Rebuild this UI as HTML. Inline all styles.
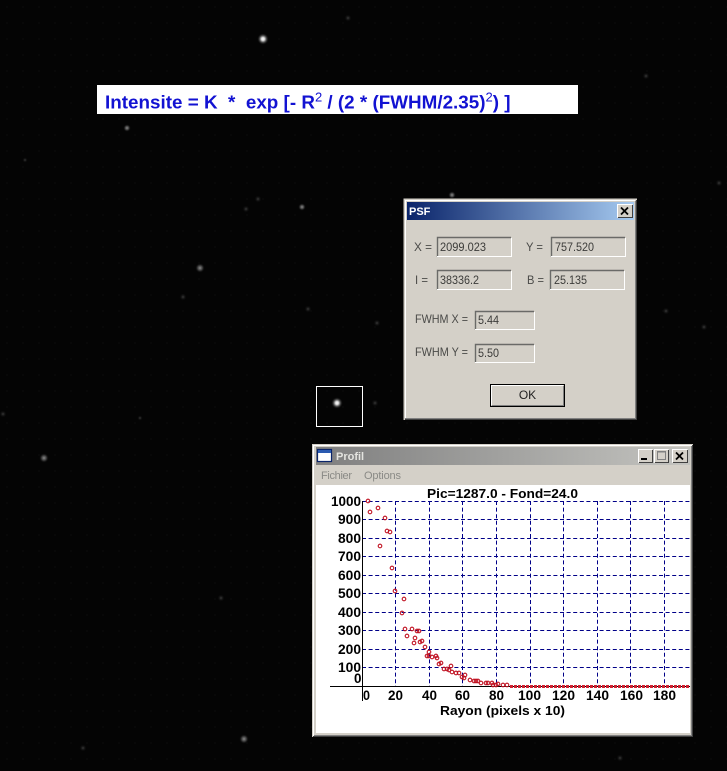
<!DOCTYPE html>
<html><head><meta charset="utf-8"><style>
html,body{margin:0;padding:0;background:#040404;width:727px;height:771px;overflow:hidden}
svg{display:block}
text{font-family:"Liberation Sans",sans-serif}
.l{font-size:12px;fill:#4a4a48}
.v{font-size:12px;fill:#3c3c3a}
.n{font-size:14px;font-weight:bold;fill:#000}
</style></head><body>
<svg width="727" height="771" viewBox="0 0 727 771" xmlns="http://www.w3.org/2000/svg">
<defs>
<radialGradient id="s"><stop offset="0" stop-color="#fff"/><stop offset=".25" stop-color="#ddd"/><stop offset=".55" stop-color="#555"/><stop offset="1" stop-color="#000" stop-opacity="0"/></radialGradient>
<radialGradient id="f"><stop offset="0" stop-color="#8a8a8a"/><stop offset=".5" stop-color="#3a3a3a"/><stop offset="1" stop-color="#000" stop-opacity="0"/></radialGradient>
<radialGradient id="d"><stop offset="0" stop-color="#3a3a3a"/><stop offset="1" stop-color="#000" stop-opacity="0"/></radialGradient>
<linearGradient id="t1"><stop offset="0" stop-color="#0a246a"/><stop offset="1" stop-color="#a6caf0"/></linearGradient>
<linearGradient id="t2"><stop offset="0" stop-color="#7f7f7f"/><stop offset="1" stop-color="#c4c4c0"/></linearGradient>
<pattern id="g" width="16" height="16" patternUnits="userSpaceOnUse"><rect x="6" y="6" width="2" height="2" fill="#080808"/></pattern>
</defs>
<rect width="727" height="771" fill="#040404"/>
<rect width="727" height="771" fill="url(#g)"/>
<!-- stars -->
<circle cx="263" cy="39" r="6" fill="url(#s)"/>
<circle cx="337" cy="403" r="6" fill="url(#s)"/>
<circle cx="200" cy="268" r="5" fill="url(#f)"/>
<circle cx="44" cy="458" r="5" fill="url(#f)"/>
<circle cx="244" cy="739" r="5" fill="url(#f)"/>
<circle cx="83" cy="748" r="4" fill="url(#d)"/>
<circle cx="127" cy="128" r="4" fill="url(#f)"/>
<circle cx="302" cy="207" r="4" fill="url(#f)"/>
<circle cx="258" cy="199" r="4" fill="url(#d)"/>
<circle cx="246" cy="209" r="4" fill="url(#d)"/>
<circle cx="452" cy="195" r="4" fill="url(#f)"/>
<circle cx="377" cy="323" r="4" fill="url(#d)"/>
<circle cx="308" cy="309" r="4" fill="url(#d)"/>
<circle cx="183" cy="297" r="4" fill="url(#d)"/>
<circle cx="666" cy="311" r="4" fill="url(#d)"/>
<circle cx="704" cy="327" r="4" fill="url(#d)"/>
<circle cx="719" cy="183" r="4" fill="url(#d)"/>
<circle cx="348" cy="18" r="4" fill="url(#d)"/>
<circle cx="646" cy="76" r="4" fill="url(#d)"/>
<circle cx="221" cy="598" r="4" fill="url(#d)"/>
<circle cx="3" cy="414" r="4" fill="url(#d)"/>
<circle cx="25" cy="160" r="3" fill="url(#d)"/>
<circle cx="140" cy="418" r="3" fill="url(#d)"/>
<circle cx="620" cy="758" r="4" fill="url(#d)"/>
<circle cx="375" cy="403" r="4" fill="url(#d)"/>
<!-- selection box -->
<rect x="316.5" y="386.5" width="46" height="40" fill="none" stroke="#fff" stroke-width="1"/>
<!-- formula -->
<rect x="97" y="85" width="481" height="29" fill="#fff"/>
<text x="105" y="108.5" font-size="18.85" font-weight="bold" fill="#1212d2" xml:space="preserve">Intensite = K  *  exp [- R<tspan font-size="13" dy="-7" font-weight="normal">2</tspan><tspan dy="7"> / (2 * (FWHM/2.35)</tspan><tspan font-size="13" dy="-7" font-weight="normal">2</tspan><tspan dy="7">) ]</tspan></text>
<!-- PSF dialog -->
<rect x="404" y="199" width="233" height="221" fill="#d4d0c8"/>
<path d="M404 420V199H637" fill="none" stroke="#d4d0c8"/>
<path d="M405 419.5H636.5V200" fill="none" stroke="#404040"/>
<path d="M405 418.5H635.5V201" fill="none" stroke="#808080"/>
<path d="M405.5 418V200.5H635" fill="none" stroke="#fff"/>
<rect x="407" y="202" width="227" height="18" fill="url(#t1)"/>
<text x="409" y="215" font-size="11" font-weight="bold" fill="#fff">PSF</text>
<g>
<rect x="617" y="204" width="16" height="14" fill="#d4d0c8"/>
<path d="M617.5 217.5V204.5H632.5" fill="none" stroke="#fff"/>
<path d="M618 217.5H632.5V205" fill="none" stroke="#404040"/>
<path d="M621 207.5l7 7M628 207.5l-7 7" stroke="#000" stroke-width="1.8"/>
</g>
<!-- fields -->
<g fill="none">
<path d="M437.5 257V237.5H511" stroke="#6a6a68" stroke-width="1.4"/><path d="M437 256.5H511.5V238" stroke="#fff"/>
<path d="M551.5 257V237.5H625" stroke="#6a6a68" stroke-width="1.4"/><path d="M551 256.5H625.5V238" stroke="#fff"/>
<path d="M437.5 290V270.5H511" stroke="#6a6a68" stroke-width="1.4"/><path d="M437 289.5H511.5V271" stroke="#fff"/>
<path d="M550.5 290V270.5H624" stroke="#6a6a68" stroke-width="1.4"/><path d="M550 289.5H624.5V271" stroke="#fff"/>
<path d="M475.5 330V311.5H534" stroke="#6a6a68" stroke-width="1.4"/><path d="M475 329.5H534.5V312" stroke="#fff"/>
<path d="M475.5 362V344.5H534" stroke="#6a6a68" stroke-width="1.4"/><path d="M475 362.5H534.5V345" stroke="#fff"/>
</g>
<text class="l" x="414" y="251" textLength="18" lengthAdjust="spacingAndGlyphs">X =</text>
<text class="l" x="526" y="251" textLength="17" lengthAdjust="spacingAndGlyphs">Y =</text>
<text class="l" x="415" y="284" textLength="13" lengthAdjust="spacingAndGlyphs">I =</text>
<text class="l" x="527" y="284" textLength="17" lengthAdjust="spacingAndGlyphs">B =</text>
<text class="l" x="415" y="323" textLength="53" lengthAdjust="spacingAndGlyphs">FWHM X =</text>
<text class="l" x="415" y="356" textLength="53" lengthAdjust="spacingAndGlyphs">FWHM Y =</text>
<text class="v" x="440" y="251" textLength="46" lengthAdjust="spacingAndGlyphs">2099.023</text>
<text class="v" x="555" y="251" textLength="39" lengthAdjust="spacingAndGlyphs">757.520</text>
<text class="v" x="440" y="284" textLength="39" lengthAdjust="spacingAndGlyphs">38336.2</text>
<text class="v" x="554" y="284" textLength="33" lengthAdjust="spacingAndGlyphs">25.135</text>
<text class="v" x="478" y="324" textLength="21" lengthAdjust="spacingAndGlyphs">5.44</text>
<text class="v" x="478" y="357" textLength="21" lengthAdjust="spacingAndGlyphs">5.50</text>
<!-- OK -->
<rect x="490.5" y="384.5" width="74" height="22" fill="#d4d0c8" stroke="#000"/>
<path d="M491.5 405V385.5H563" fill="none" stroke="#fff"/>
<path d="M492 405.5H563.5V386" fill="none" stroke="#808080"/>
<text x="527.5" y="399" font-size="12" fill="#222" text-anchor="middle">OK</text>
<!-- Profil window -->
<rect x="312" y="444" width="381" height="293" fill="#d4d0c8"/>
<path d="M313.5 736V445.5H692" fill="none" stroke="#fff"/>
<path d="M313 736.5H692.5V445" fill="none" stroke="#404040"/>
<path d="M314 735.5H691.5V446" fill="none" stroke="#808080"/>
<rect x="316" y="447" width="374" height="18" fill="url(#t2)"/>
<rect x="317.5" y="449.5" width="14" height="12" fill="#fff" stroke="#0a246a" stroke-width="1.2"/>
<rect x="318" y="450" width="13" height="3" fill="#2a5ab0"/>
<text x="336" y="460" font-size="11" font-weight="bold" fill="#e4e4e0">Profil</text>
<g>
<rect x="638" y="449" width="15" height="14" fill="#d4d0c8"/><path d="M638.5 462.5V449.5H652.5" fill="none" stroke="#fff"/><path d="M639 462.5H652.5V450" fill="none" stroke="#404040"/>
<rect x="641" y="458" width="6" height="2" fill="#000"/>
<rect x="654" y="449" width="15" height="14" fill="#d4d0c8"/><path d="M654.5 462.5V449.5H668.5" fill="none" stroke="#fff"/><path d="M655 462.5H668.5V450" fill="none" stroke="#404040"/>
<rect x="657.5" y="451.5" width="8" height="8" fill="none" stroke="#808080"/><path d="M657 452h9" stroke="#808080"/>
<rect x="672" y="449" width="16" height="14" fill="#d4d0c8"/><path d="M672.5 462.5V449.5H687.5" fill="none" stroke="#fff"/><path d="M673 462.5H687.5V450" fill="none" stroke="#404040"/>
<path d="M676 452.5l7 7M683 452.5l-7 7" stroke="#000" stroke-width="1.8"/>
</g>
<text x="321" y="479" font-size="11" fill="#8a8a86" textLength="31">Fichier</text>
<text x="364" y="479" font-size="11" fill="#8a8a86" textLength="37">Options</text>
<!-- plot area -->
<rect x="316" y="485" width="374" height="248" fill="#fff"/>
<g stroke="#000088" stroke-width="1" stroke-dasharray="4 2.6" fill="none">
<path d="M362 501.5H690M362 519.5H690M362 538.5H690M362 556.5H690M362 575.5H690M362 593.5H690M362 612.5H690M362 630.5H690M362 649.5H690M362 667.5H690"/>
<path d="M395.5 501V686M429.5 501V686M462.5 501V686M496.5 501V686M530.5 501V686M563.5 501V686M597.5 501V686M630.5 501V686M664.5 501V686"/>
</g>
<path d="M362.5 501V701M330 686.5H690" stroke="#000" stroke-width="1" fill="none"/>
<text class="n" x="427" y="498" textLength="151" lengthAdjust="spacingAndGlyphs" style="font-size:13px">Pic=1287.0 - Fond=24.0</text>
<text class="n" x="331" y="506" textLength="30" lengthAdjust="spacingAndGlyphs">1000</text>
<text class="n" x="338" y="524" textLength="23" lengthAdjust="spacingAndGlyphs">900</text>
<text class="n" x="338" y="543" textLength="23" lengthAdjust="spacingAndGlyphs">800</text>
<text class="n" x="338" y="561" textLength="23" lengthAdjust="spacingAndGlyphs">700</text>
<text class="n" x="338" y="580" textLength="23" lengthAdjust="spacingAndGlyphs">600</text>
<text class="n" x="338" y="598" textLength="23" lengthAdjust="spacingAndGlyphs">500</text>
<text class="n" x="338" y="617" textLength="23" lengthAdjust="spacingAndGlyphs">400</text>
<text class="n" x="338" y="635" textLength="23" lengthAdjust="spacingAndGlyphs">300</text>
<text class="n" x="338" y="654" textLength="23" lengthAdjust="spacingAndGlyphs">200</text>
<text class="n" x="338" y="672" textLength="23" lengthAdjust="spacingAndGlyphs">100</text>
<text class="n" x="354" y="683" textLength="7.5" lengthAdjust="spacingAndGlyphs">0</text>
<text class="n" x="363" y="700" textLength="7" lengthAdjust="spacingAndGlyphs">0</text>
<text class="n" x="388" y="700" textLength="15" lengthAdjust="spacingAndGlyphs">20</text>
<text class="n" x="422" y="700" textLength="15" lengthAdjust="spacingAndGlyphs">40</text>
<text class="n" x="455" y="700" textLength="15" lengthAdjust="spacingAndGlyphs">60</text>
<text class="n" x="489" y="700" textLength="15" lengthAdjust="spacingAndGlyphs">80</text>
<text class="n" x="518" y="700" textLength="23" lengthAdjust="spacingAndGlyphs">100</text>
<text class="n" x="552" y="700" textLength="23" lengthAdjust="spacingAndGlyphs">120</text>
<text class="n" x="586" y="700" textLength="23" lengthAdjust="spacingAndGlyphs">140</text>
<text class="n" x="620" y="700" textLength="23" lengthAdjust="spacingAndGlyphs">160</text>
<text class="n" x="653" y="700" textLength="23" lengthAdjust="spacingAndGlyphs">180</text>
<text class="n" x="440" y="715" style="font-size:13px" textLength="125" lengthAdjust="spacingAndGlyphs">Rayon (pixels x 10)</text>
<!-- data points -->
<g fill="none" stroke="#c01020" stroke-width="1.1">
<circle cx="368" cy="501" r="1.8"/><circle cx="370" cy="512" r="1.8"/><circle cx="378" cy="508" r="1.8"/><circle cx="385" cy="518" r="1.8"/><circle cx="387" cy="531" r="1.8"/><circle cx="390" cy="532" r="1.8"/><circle cx="380" cy="546" r="1.8"/><circle cx="392" cy="568" r="1.8"/>
<circle cx="395" cy="591" r="1.8"/><circle cx="404" cy="599" r="1.8"/><circle cx="402" cy="613" r="1.8"/><circle cx="405" cy="629" r="1.8"/><circle cx="407" cy="636" r="1.8"/><circle cx="412" cy="629" r="1.8"/><circle cx="417" cy="631" r="1.8"/><circle cx="419" cy="631" r="1.8"/><circle cx="415" cy="638" r="1.8"/><circle cx="414" cy="643" r="1.8"/><circle cx="420" cy="642" r="1.8"/><circle cx="422" cy="641" r="1.8"/><circle cx="425" cy="647" r="1.8"/><circle cx="429" cy="652" r="1.8"/><circle cx="427" cy="656" r="1.8"/><circle cx="429" cy="656" r="1.8"/><circle cx="432" cy="657" r="1.8"/><circle cx="436" cy="656" r="1.8"/><circle cx="437" cy="658" r="1.8"/><circle cx="441" cy="663" r="1.8"/><circle cx="439" cy="664" r="1.8"/><circle cx="444" cy="669" r="1.8"/><circle cx="447" cy="669" r="1.8"/><circle cx="449" cy="670" r="1.8"/><circle cx="451" cy="666" r="1.8"/><circle cx="452" cy="672" r="1.8"/><circle cx="456" cy="673" r="1.8"/><circle cx="459" cy="673" r="1.8"/><circle cx="462" cy="677" r="1.8"/><circle cx="465" cy="675" r="1.8"/><circle cx="464" cy="678" r="1.8"/><circle cx="470" cy="680" r="1.8"/><circle cx="474" cy="681" r="1.8"/><circle cx="476" cy="681" r="1.8"/><circle cx="478" cy="681" r="1.8"/><circle cx="481" cy="683" r="1.8"/><circle cx="486" cy="683" r="1.8"/><circle cx="488" cy="683" r="1.8"/><circle cx="492" cy="683" r="1.8"/><circle cx="493" cy="685" r="1.8"/><circle cx="496" cy="685" r="1.8"/><circle cx="498" cy="684" r="1.8"/><circle cx="503" cy="685" r="1.8"/><circle cx="507" cy="685" r="1.8"/>
</g>
<path d="M510 686.5H690" stroke="#d02030" stroke-width="3" stroke-dasharray="3 1"/>
</svg>
</body></html>
